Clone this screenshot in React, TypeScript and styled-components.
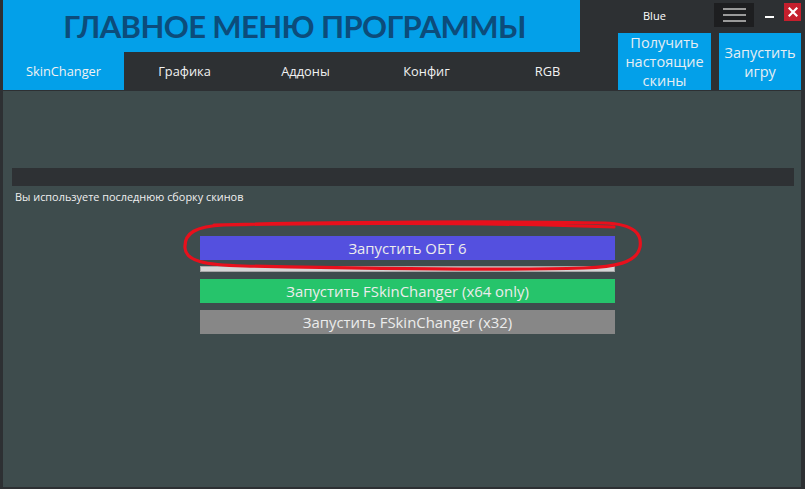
import React from "react";
import styled, { createGlobalStyle } from "styled-components";

const Global = createGlobalStyle`
  html, body { margin: 0; padding: 0; background: #2d3033; }
  body { font-family: "Open Sans", "Noto Sans", sans-serif; }
`;

const Window = styled.div`
  width: 805px;
  height: 489px;
  box-sizing: border-box;
  padding: 0 4px 2px 3px;
  background: #2d3033;
  display: flex;
  flex-direction: column;
  overflow: hidden;
`;

const Header = styled.header`
  height: 91px;
  display: flex;
  flex-shrink: 0;
`;

const LeftCol = styled.div`
  width: 615px;
  flex-shrink: 0;
  display: flex;
  flex-direction: column;
`;

const TitleBlock = styled.div`
  width: 577px;
  height: 52px;
  background: #03a0e9;
  display: flex;
  align-items: center;
  justify-content: center;
  padding-left: 6px;
  box-sizing: border-box;
`;

const Title = styled.h1`
  margin: 0;
  font-family: Lato, "Open Sans", sans-serif;
  font-weight: 700;
  font-size: 31px;
  letter-spacing: -0.6px;
  color: #0c4c7b;
  line-height: 1;
  padding-top: 1px;
`;

const TabBar = styled.nav`
  height: 38px;
  display: flex;
`;

const Tab = styled.div<{ $active?: boolean }>`
  width: 121px;
  flex-shrink: 0;
  height: 38px;
  display: flex;
  align-items: center;
  justify-content: center;
  font-size: 12.8px;
  color: #f2f2f2;
  background: ${(p) => (p.$active ? "#03a0e9" : "transparent")};
`;

const RightCol = styled.div`
  flex: 1;
  display: flex;
  flex-direction: column;
`;

const WinBar = styled.div`
  height: 33px;
  display: flex;
  align-items: flex-start;
`;

const Skin = styled.span`
  font-size: 11px;
  color: #ffffff;
  margin: 8px 0 0 25px;
  width: 71px;
`;

const Hamburger = styled.div`
  width: 40px;
  height: 24px;
  margin-top: 3px;
  background: #1d1e20;
  display: flex;
  flex-direction: column;
  align-items: center;
  justify-content: center;
  gap: 4px;
`;

const HLine = styled.span`
  display: block;
  width: 23px;
  height: 2px;
  background: #9a9a9a;
`;

const Minus = styled.span`
  width: 9px;
  height: 2px;
  background: #ffffff;
  margin: 16px 0 0 11px;
`;

const Close = styled.div`
  width: 17px;
  height: 18px;
  margin: 3px 0 0 10px;
  background: #c51f2d;
  display: flex;
  align-items: center;
  justify-content: center;
`;

const ActionRow = styled.div`
  display: flex;
  height: 57px;
  gap: 8px;
`;

const ActionBtn = styled.div<{ $w: number }>`
  width: ${(p) => p.$w}px;
  background: #03a0e9;
  color: #e6eef3;
  font-size: 14.5px;
  line-height: 19px;
  text-align: center;
  display: flex;
  align-items: center;
  justify-content: center;
`;

const Content = styled.main`
  flex: 1;
  background: #3e4c4d;
  padding: 77px 7px 0 9px;
  display: flex;
  flex-direction: column;
`;

const Bar = styled.div`
  height: 18px;
  background: #2e3134;
`;

const Status = styled.div`
  font-size: 10.9px;
  color: #f0f0f0;
  margin: 3px 0 0 3px;
`;

const Buttons = styled.div`
  position: relative;
  margin: 32px 0 0 188px;
  width: 415px;
  display: flex;
  flex-direction: column;
`;

const LaunchBtn = styled.div<{ $bg: string; $mt: number }>`
  height: 24px;
  margin-top: ${(p) => p.$mt}px;
  background: ${(p) => p.$bg};
  color: #ececec;
  font-size: 14.9px;
  display: flex;
  align-items: center;
  justify-content: center;
`;

const Progress = styled.div`
  height: 4px;
  margin-top: 6px;
  background: #d6d6d6;
  border: 1px solid #a9a9a9;
`;

const Circle = styled.svg`
  position: absolute;
  left: -16px;
  top: -15px;
  width: 460px;
  height: 52px;
  overflow: visible;
  pointer-events: none;
`;

export default function App() {
  const tabs = ["SkinChanger", "Графика", "Аддоны", "Конфиг", "RGB"];
  return (
    <>
      <Global />
      <Window>
        <Header>
          <LeftCol>
            <TitleBlock>
              <Title>ГЛАВНОЕ МЕНЮ ПРОГРАММЫ</Title>
            </TitleBlock>
            <TabBar>
              {tabs.map((t, i) => (
                <Tab key={t} $active={i === 0}>
                  {t}
                </Tab>
              ))}
            </TabBar>
          </LeftCol>
          <RightCol>
            <WinBar>
              <Skin>Blue</Skin>
              <Hamburger>
                <HLine />
                <HLine />
                <HLine />
              </Hamburger>
              <Minus />
              <Close>
                <svg width="10" height="10" viewBox="0 0 10 10">
                  <path d="M1.5 1.5 L8.5 8.5 M8.5 1.5 L1.5 8.5" stroke="#fff" strokeWidth="2.2" strokeLinecap="square" />
                </svg>
              </Close>
            </WinBar>
            <ActionRow>
              <ActionBtn $w={93}>
                Получить
                <br />
                настоящие
                <br />
                скины
              </ActionBtn>
              <ActionBtn $w={82}>
                Запустить
                <br />
                игру
              </ActionBtn>
            </ActionRow>
          </RightCol>
        </Header>
        <Content>
          <Bar />
          <Status>Вы используете последнюю сборку скинов</Status>
          <Buttons>
            <LaunchBtn $bg="#5450df" $mt={0}>Запустить ОБТ 6</LaunchBtn>
            <Progress />
            <LaunchBtn $bg="#26c46b" $mt={7}>Запустить FSkinChanger (x64 only)</LaunchBtn>
            <LaunchBtn $bg="#878787" $mt={7}>Запустить FSkinChanger (x32)</LaunchBtn>
            <Circle viewBox="0 0 460 52">
              <path
                d="M30 4 C 140 1, 330 0, 420 2 C 452 3, 458 14, 456 26 C 453 42, 430 46, 400 47 C 300 50, 150 47, 60 45 C 20 44, 2 40, 1 27 C 0 12, 12 5, 40 4 C 120 2, 300 1, 430 6"
                fill="none"
                stroke="#e8101c"
                strokeWidth="3.2"
                strokeLinecap="round"
              />
            </Circle>
          </Buttons>
        </Content>
      </Window>
    </>
  );
}
